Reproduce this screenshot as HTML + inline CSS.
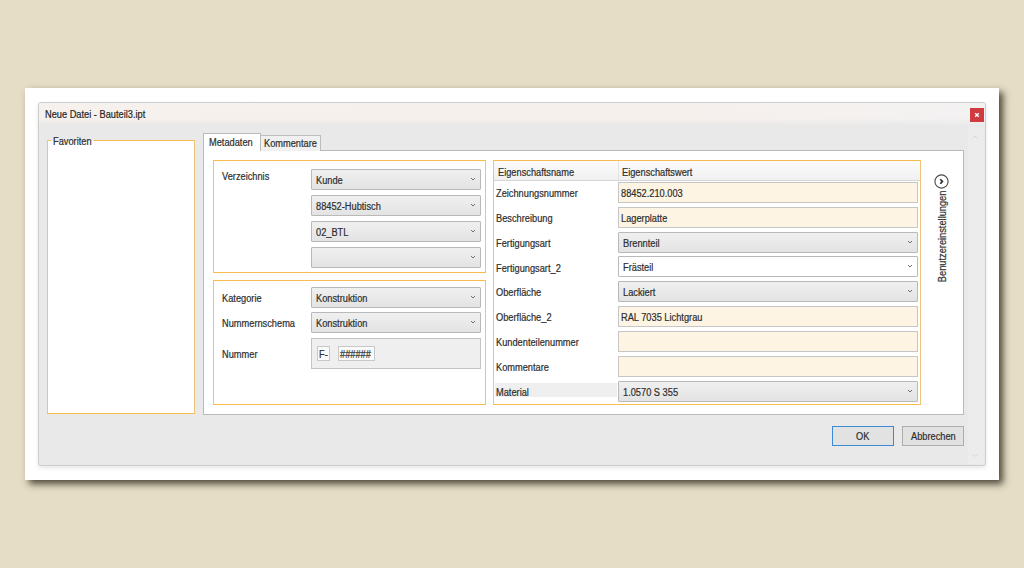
<!DOCTYPE html>
<html><head><meta charset="utf-8">
<style>
*{box-sizing:border-box;margin:0;padding:0}
html,body{width:1024px;height:568px;overflow:hidden;background:#e5ddc6;font-family:"Liberation Sans",sans-serif;font-size:10px;color:#2e2e2e;letter-spacing:0;-webkit-text-stroke:0.2px #2e2e2e}
.a{position:absolute}
.t{position:absolute;white-space:nowrap;line-height:11px;transform:scaleX(.925);transform-origin:0 0}
#outer{left:25px;top:88px;width:974px;height:392px;background:#fff;box-shadow:4px 4px 7px rgba(50,45,30,.85)}
#dlg{left:38px;top:102px;width:948px;height:364px;background:#e9e9e9;border:1px solid #cdcdcd;border-radius:3px;overflow:hidden;box-shadow:0 2px 4px rgba(0,0,0,.10)}
#title{left:0;top:0;width:946px;height:23px;background:linear-gradient(rgba(233,233,233,0) 15px,#e9e9e9 23px),linear-gradient(90deg,#f6f1ed,#f6f0ec 65%,#f3f2f2)}
#close{left:931px;top:5px;width:14px;height:14px;background:#d2383e}
.grp{position:absolute;border:1px solid;border-color:#f8bc4a #eec47c;background:#fff}
.combo{position:absolute;height:21px;border:1px solid #b9b9b9;background:linear-gradient(#f0f0f0,#e3e3e3);border-radius:1px}
.combo .t{left:4px;top:5px}
.chev{position:absolute;right:4px;top:7px;width:6px;height:4px}
.val{position:absolute;height:21px;border:1px solid #c6c6c6;background:#fdf4e3}
.val .t{left:2px;top:5px}
.lbl{position:absolute;white-space:nowrap;line-height:11px;transform:scaleX(.925);transform-origin:0 0}
</style></head>
<body>
<div id="outer" class="a"></div>
<div id="dlg" class="a">
  <div id="title" class="a"></div>
</div>
<!-- absolute page coordinates below -->
<div class="t" style="left:45px;top:109px;color:#222">Neue Datei - Bauteil3.ipt</div>
<div class="a" style="left:970px;top:108px;width:14px;height:14px;background:#cf3b3f"></div>
<svg class="a" style="left:970px;top:108px" width="14" height="14"><path d="M5.2 5.2 L8.8 8.8 M8.8 5.2 L5.2 8.8" stroke="#fff" stroke-width="1.3"/></svg>
<!-- scroll track -->
<div class="a" style="left:968px;top:127px;width:16px;height:337px;background:#ececec"></div>
<svg class="a" style="left:970px;top:133px" width="10" height="8"><path d="M2.5 5.5 L5 3 L7.5 5.5" stroke="#d6d6d6" fill="none" stroke-width="1"/></svg>
<svg class="a" style="left:970px;top:451px" width="10" height="8"><path d="M2.5 3 L5 5.5 L7.5 3" stroke="#d6d6d6" fill="none" stroke-width="1"/></svg>

<!-- Favoriten -->
<div class="grp" style="left:47px;top:140px;width:148px;height:274px"></div>
<div class="a" style="left:51px;top:136px;width:43px;height:8px;background:#e9e9e9"></div>
<div class="a" style="left:51px;top:141px;width:43px;height:4px;background:#fff"></div>
<div class="t" style="left:53px;top:136px">Favoriten</div>

<!-- Tab panel -->
<div class="a" style="left:203px;top:150px;width:761px;height:265px;background:#fff;border:1px solid #bababa"></div>
<div class="a" style="left:260px;top:135px;width:61px;height:16px;background:#f0f0f0;border:1px solid #bdbdbd;border-bottom:none"></div>
<div class="a" style="left:203px;top:133px;width:58px;height:18px;background:#fff;border:1px solid #bababa;border-bottom:none"></div>
<div class="t" style="left:209px;top:137px">Metadaten</div>
<div class="t" style="left:264px;top:138px">Kommentare</div>

<!-- Verzeichnis group -->
<div class="grp" style="left:213px;top:160px;width:273px;height:113px"></div>
<div class="lbl" style="left:222px;top:171px">Verzeichnis</div>
<div class="combo" style="left:311px;top:169px;width:170px"><div class="t">Kunde</div><svg class="chev" viewBox="0 0 6 4"><path d="M1 1 L3 3 L5 1" stroke="#707070" stroke-width="1" fill="none"/></svg></div>
<div class="combo" style="left:311px;top:195px;width:170px"><div class="t">88452-Hubtisch</div><svg class="chev" viewBox="0 0 6 4"><path d="M1 1 L3 3 L5 1" stroke="#707070" stroke-width="1" fill="none"/></svg></div>
<div class="combo" style="left:311px;top:221px;width:170px"><div class="t">02_BTL</div><svg class="chev" viewBox="0 0 6 4"><path d="M1 1 L3 3 L5 1" stroke="#707070" stroke-width="1" fill="none"/></svg></div>
<div class="combo" style="left:311px;top:247px;width:170px"><svg class="chev" viewBox="0 0 6 4"><path d="M1 1 L3 3 L5 1" stroke="#707070" stroke-width="1" fill="none"/></svg></div>

<!-- Kategorie group -->
<div class="grp" style="left:213px;top:280px;width:273px;height:125px"></div>
<div class="lbl" style="left:222px;top:293px">Kategorie</div>
<div class="lbl" style="left:222px;top:318px">Nummernschema</div>
<div class="lbl" style="left:222px;top:349px">Nummer</div>
<div class="combo" style="left:311px;top:287px;width:170px"><div class="t">Konstruktion</div><svg class="chev" viewBox="0 0 6 4"><path d="M1 1 L3 3 L5 1" stroke="#707070" stroke-width="1" fill="none"/></svg></div>
<div class="combo" style="left:311px;top:312px;width:170px"><div class="t">Konstruktion</div><svg class="chev" viewBox="0 0 6 4"><path d="M1 1 L3 3 L5 1" stroke="#707070" stroke-width="1" fill="none"/></svg></div>
<div class="a" style="left:311px;top:338px;width:170px;height:31px;border:1px solid #c4c4c4;background:#efefef"></div>
<div class="a" style="left:317px;top:346px;width:13px;height:15px;border:1px solid #c8c8c8;background:#fafafa"></div>
<div class="t" style="left:319px;top:349px">F-</div>
<div class="a" style="left:338px;top:346px;width:37px;height:15px;border:1px solid #c8c8c8;background:#fafafa"></div>
<div class="t" style="left:340px;top:349px">######</div>

<!-- Property grid -->
<div class="grp" style="left:493px;top:160px;width:428px;height:245px"></div>
<div class="a" style="left:494px;top:161px;width:426px;height:20px;background:linear-gradient(#fbfbfb,#f1f1f1);border-bottom:1px solid #d6d6d6"></div>
<div class="a" style="left:618px;top:161px;width:1px;height:19px;background:#e2e2e2"></div>
<div class="lbl" style="left:498px;top:167px">Eigenschaftsname</div>
<div class="lbl" style="left:622px;top:167px">Eigenschaftswert</div>

<div class="lbl" style="left:496px;top:188px">Zeichnungsnummer</div>
<div class="lbl" style="left:496px;top:213px">Beschreibung</div>
<div class="lbl" style="left:496px;top:238px">Fertigungsart</div>
<div class="lbl" style="left:496px;top:263px">Fertigungsart_2</div>
<div class="lbl" style="left:496px;top:287px">Oberfläche</div>
<div class="lbl" style="left:496px;top:312px">Oberfläche_2</div>
<div class="lbl" style="left:496px;top:337px">Kundenteilenummer</div>
<div class="lbl" style="left:496px;top:362px">Kommentare</div>
<div class="a" style="left:495px;top:383px;width:122px;height:14px;background:#efefef"></div>
<div class="lbl" style="left:496px;top:387px">Material</div>

<div class="val" style="left:618px;top:182px;width:300px"><div class="t">88452.210.003</div></div>
<div class="val" style="left:618px;top:207px;width:300px"><div class="t">Lagerplatte</div></div>
<div class="combo" style="left:618px;top:232px;width:300px"><div class="t">Brennteil</div><svg class="chev" viewBox="0 0 6 4"><path d="M1 1 L3 3 L5 1" stroke="#707070" stroke-width="1" fill="none"/></svg></div>
<div class="combo" style="left:618px;top:256px;width:300px;background:#fff"><div class="t">Frästeil</div><svg class="chev" viewBox="0 0 6 4"><path d="M1 1 L3 3 L5 1" stroke="#707070" stroke-width="1" fill="none"/></svg></div>
<div class="combo" style="left:618px;top:281px;width:300px"><div class="t">Lackiert</div><svg class="chev" viewBox="0 0 6 4"><path d="M1 1 L3 3 L5 1" stroke="#707070" stroke-width="1" fill="none"/></svg></div>
<div class="val" style="left:618px;top:306px;width:300px"><div class="t">RAL 7035 Lichtgrau</div></div>
<div class="val" style="left:618px;top:331px;width:300px"></div>
<div class="val" style="left:618px;top:356px;width:300px"></div>
<div class="combo" style="left:618px;top:381px;width:300px"><div class="t">1.0570 S 355</div><svg class="chev" viewBox="0 0 6 4"><path d="M1 1 L3 3 L5 1" stroke="#707070" stroke-width="1" fill="none"/></svg></div>

<!-- Benutzereinstellungen -->
<svg class="a" style="left:934px;top:174px" width="15" height="15"><circle cx="7.5" cy="7.5" r="6.6" stroke="#4a4a4a" stroke-width="1.1" fill="#fff"/><path d="M6.3 5.2 L8.4 7.5 L6.3 9.8" stroke="#2a2a2a" stroke-width="1.7" fill="none"/></svg>
<div class="t" style="left:897px;top:235px;width:90px;transform:rotate(-90deg) scaleX(.925);transform-origin:center;text-align:center">Benutzereinstellungen</div>

<!-- Buttons -->
<div class="a" style="left:832px;top:426px;width:62px;height:20px;border:1px solid #3c8ad6;background:#e2e2e2"></div>
<div class="t" style="left:856px;top:431px">OK</div>
<div class="a" style="left:902px;top:426px;width:62px;height:20px;border:1px solid #adadad;background:#e1e1e1"></div>
<div class="t" style="left:911px;top:431px">Abbrechen</div>
</body></html>
